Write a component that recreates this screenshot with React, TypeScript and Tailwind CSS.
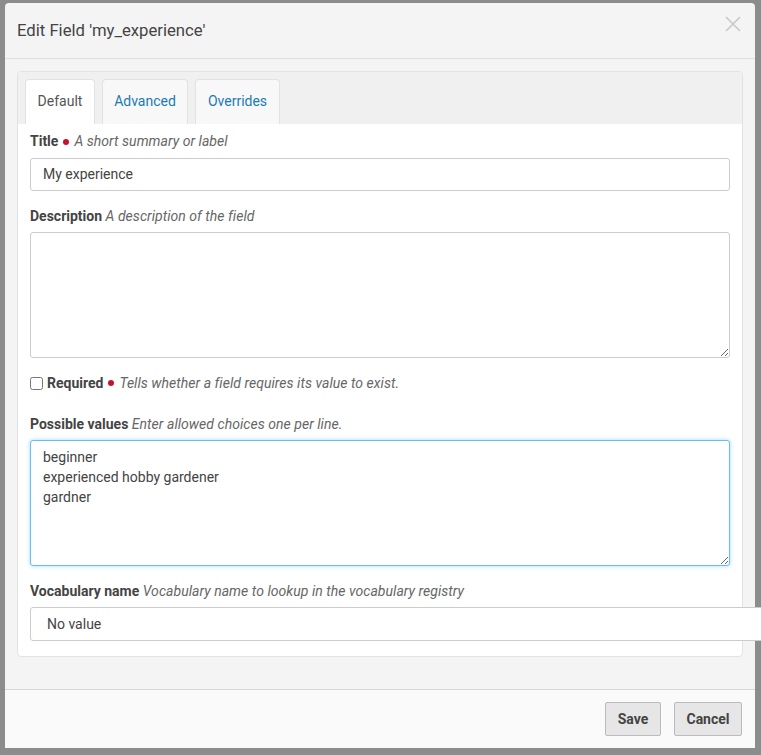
export default function App() {
  return (
    <div className="min-h-[755px] w-[761px] overflow-hidden bg-[#8c8c8c] pl-[5px] pt-[3px] font-['Roboto',sans-serif] text-[14px] text-[#444]">
      <div className="flex h-[745px] w-[750px] flex-col rounded-t-[4px] bg-[#f4f4f4]">
        {/* Header */}
        <div className="flex h-[56px] shrink-0 items-center justify-between border-b border-[#e0e0e0] pl-[12px] pr-[14px]">
          <h1 className="text-[16.7px] text-[#444]">Edit Field 'my_experience'</h1>
          <svg width="16" height="16" viewBox="0 0 16 16" className="-mt-[14px] text-[#c8c8c8]" fill="none" stroke="currentColor" strokeWidth="1.6">
            <path d="M1 1l14 14M15 1L1 15" />
          </svg>
        </div>

        {/* Body */}
        <div className="flex-1 px-[12px] pt-[12px]">
          <div className="rounded-[4px] border border-[#e2e2e2] bg-white">
            {/* Tabs */}
            <div className="flex h-[52px] items-end gap-[7px] rounded-t-[4px] bg-[#f0f0f0] pl-[7px]">
              <div className="flex h-[45px] w-[70px] items-center justify-center rounded-t-[4px] border border-b-0 border-[#e2e2e2] bg-white pb-[1px] text-[#555]">
                Default
              </div>
              <div className="flex h-[45px] w-[86px] items-center justify-center rounded-t-[4px] border border-b-0 border-[#e2e2e2] bg-[#f8f8f8] pb-[1px] text-[#1a7bb5]">
                Advanced
              </div>
              <div className="flex h-[45px] w-[85px] items-center justify-center rounded-t-[4px] border border-b-0 border-[#e2e2e2] bg-[#f8f8f8] pb-[1px] text-[#1a7bb5]">
                Overrides
              </div>
            </div>

            {/* Form */}
            <div className="px-[12px] pb-[15px] pt-[7px]">
              <div className="leading-[20px]">
                <span className="font-bold">Title</span>
                <span className="mx-[5px] inline-block h-[6px] w-[6px] rounded-full bg-[#c4122f] align-middle" />
                <span className="italic tracking-[0.04px] text-[#666]">A short summary or label</span>
              </div>
              <div className="mt-[7px] flex h-[33px] items-center rounded-[3px] border border-[#ccc] bg-white px-[12px]">
                My experience
              </div>

              <div className="mt-[15px] leading-[20px]">
                <span className="font-bold">Description</span>{" "}
                <span className="italic tracking-[0.04px] text-[#666]">A description of the field</span>
              </div>
              <textarea
                readOnly
                className="mt-[6px] block h-[126px] w-full rounded-[3px] border border-[#ccc] bg-white px-[12px] py-[7px] leading-[20px] outline-none"
              />

              <div className="mt-[15px] flex items-center leading-[20px]">
                <input type="checkbox" className="mr-[4px] h-[13px] w-[13px]" />
                <span className="font-bold">Required</span>
                <span className="mx-[5px] inline-block h-[6px] w-[6px] rounded-full bg-[#c4122f]" />
                <span className="italic tracking-[0.04px] text-[#666]">Tells whether a field requires its value to exist.</span>
              </div>

              <div className="mt-[21px] leading-[20px]">
                <span className="font-bold">Possible values</span>{" "}
                <span className="italic tracking-[0.04px] text-[#666]">Enter allowed choices one per line.</span>
              </div>
              <textarea
                readOnly
                value={"beginner\nexperienced hobby gardener\ngardner"}
                className="mt-[6px] block h-[126px] w-full resize-y rounded-[3px] border border-[#66bfef] bg-white px-[12px] pb-[7px] pt-[6px] leading-[20px] shadow-[0_0_4px_rgba(102,191,239,0.6)] outline-none"
              />

              <div className="mt-[15px] leading-[20px]">
                <span className="font-bold">Vocabulary name</span>{" "}
                <span className="italic tracking-[0.04px] text-[#666]">Vocabulary name to lookup in the vocabulary registry</span>
              </div>
              <div className="mt-[6px] flex h-[34px] w-[740px] items-center rounded-[3px] border border-[#ccc] bg-white px-[16px]">
                No value
              </div>
            </div>
          </div>
        </div>

        {/* Footer */}
        <div className="flex h-[59px] shrink-0 items-start justify-end gap-[13px] border-t border-[#d6d6d6] bg-[#fafafa] pr-[13px] pt-[12px]">
          <button className="h-[34px] w-[56px] rounded-[2px] border border-[#bbb] bg-[#e6e6e6] font-bold text-[#444]">
            Save
          </button>
          <button className="h-[34px] w-[68px] rounded-[2px] border border-[#bbb] bg-[#e6e6e6] font-bold text-[#444]">
            Cancel
          </button>
        </div>
      </div>
    </div>
  );
}
